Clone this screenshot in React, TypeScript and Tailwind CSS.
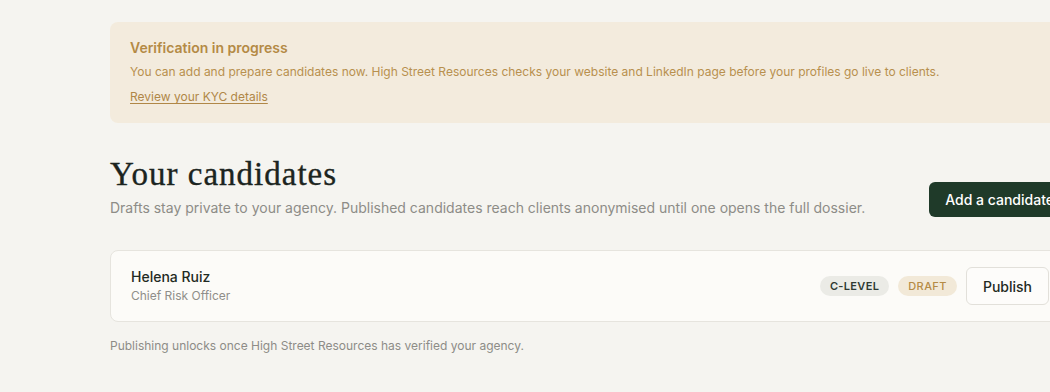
import React from "react";

export default function App() {
  return (
    <div className="min-h-[392px] w-full overflow-hidden bg-[#f5f4f0] font-['Inter','Noto_Sans',sans-serif]">
      <div className="ml-[110px] w-[960px] pt-[22px]">
        <div className="rounded-lg bg-[#f3ebdd] px-5 pt-[17px] pb-[16px]">
          <div className="text-[14px] font-semibold leading-[18px] text-[#b48a45]">Verification in progress</div>
          <p className="mt-[7px] text-[12px] leading-[16px] text-[#b8904e]">
            You can add and prepare candidates now. High Street Resources checks your website and LinkedIn page before your profiles go live to clients.
          </p>
          <a href="#" className="mt-[9px] inline-block text-[12px] leading-[16px] text-[#b08747] underline underline-offset-2">
            Review your KYC details
          </a>
        </div>

        <div className="mt-[31px] flex items-end justify-between">
          <div>
            <h1 className="font-['Liberation_Serif',serif] text-[33px] leading-[40px] tracking-[1px] text-[#1c2420] [-webkit-text-stroke:0.35px_#1c2420]">Your candidates</h1>
            <p className="mt-[4px] text-[14px] leading-[20px] text-[#8d8c87]">
              Drafts stay private to your agency. Published candidates reach clients anonymised until one opens the full dossier.
            </p>
          </div>
          <button className="mb-[1px] h-[35px] shrink-0 whitespace-nowrap rounded-md bg-[#1f3a29] px-4 text-[14px] font-medium text-white">
            Add a candidate
          </button>
        </div>

        <div className="mt-[32px] flex h-[72px] items-center justify-between rounded-lg border border-[#e6e4de] bg-[#fcfbf8] pl-5 pr-5">
          <div>
            <div className="text-[14px] font-medium leading-[18px] text-[#1f2a23]">Helena Ruiz</div>
            <div className="mt-[2px] text-[12px] leading-[16px] text-[#8f8e89]">Chief Risk Officer</div>
          </div>
          <div className="flex items-center">
            <span className="rounded-full bg-[#ebebe6] px-[10px] py-[3px] text-[11px] font-semibold leading-[14px] tracking-[0.03em] text-[#2f3a33]">C-LEVEL</span>
            <span className="ml-[9px] rounded-full bg-[#f2e9d8] px-[10px] py-[3px] text-[11px] font-medium leading-[14px] tracking-[0.04em] text-[#b58b45]">DRAFT</span>
            <button className="ml-[9px] h-[38px] rounded-md border border-[#e2e0da] bg-[#fdfcfa] px-4 text-[14px] font-medium text-[#1f2a23]">
              Publish
            </button>
          </div>
        </div>

        <p className="mt-[16px] text-[12px] leading-[16px] text-[#8d8c87]">
          Publishing unlocks once High Street Resources has verified your agency.
        </p>
      </div>
    </div>
  );
}
